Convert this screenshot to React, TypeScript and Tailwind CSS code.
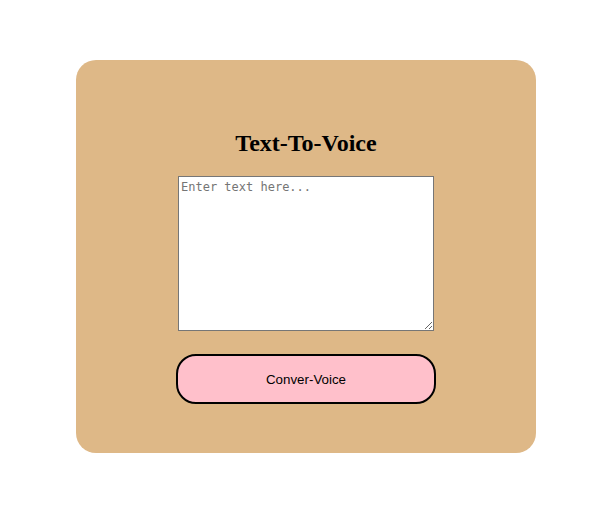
import { useState } from 'react';

export default function App() {
  const [text, setText] = useState('');

  return (
    <div className="min-h-[510px] w-full bg-white pt-[60px]">
      <div className="ml-[76px] flex h-[393px] w-[460px] flex-col items-center rounded-[20px] bg-[#deb887] pt-[70px]">
        <h2 className="font-['Liberation_Serif',serif] text-[24px] leading-[27px] font-bold text-black">
          Text-To-Voice
        </h2>
        <textarea
          value={text}
          onChange={e => setText(e.target.value)}
          placeholder="Enter text here..."
          className="mt-[19px] block h-[155px] w-[256px] border border-[#767676] bg-white px-[2px] pt-[3px] pb-[2px] font-['DejaVu_Sans_Mono',monospace] text-[12px] leading-[14px] text-black placeholder:text-[#757575] outline-none"
        />
        <button className="mt-[23px] h-[50px] w-[260px] rounded-[20px] border-2 border-black bg-[#ffc0cb] pt-px font-['Liberation_Sans',Arial,sans-serif] text-[13.333px] text-black">
          Conver-Voice
        </button>
      </div>
    </div>
  );
}
